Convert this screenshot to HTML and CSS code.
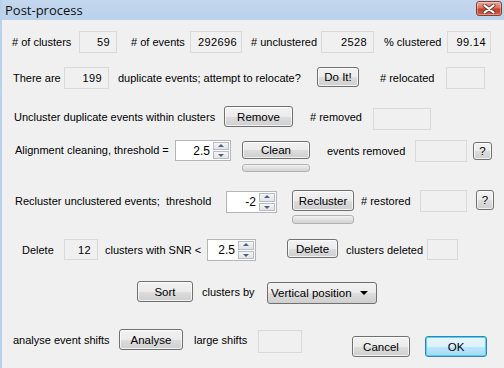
FILE: index.html
```html
<!DOCTYPE html>
<html lang="en">
<head>
    <meta charset="UTF-8">
    <meta name="viewport" content="width=device-width, initial-scale=1.0">
    <title>Post-process</title>
    <link rel="stylesheet" href="styles.css">
</head>
<body>
    <div class="window">
        <div class="titlebar">
            <span class="title">Post-process</span>
            <div class="close">
                <svg width="14" height="10" viewBox="0 0 14 10">
                    <path d="M2.5 1.5 L11.5 8.5 M11.5 1.5 L2.5 8.5" stroke="#6b3a33" stroke-width="4" stroke-linecap="round"/>
                    <path d="M2.5 1.5 L11.5 8.5 M11.5 1.5 L2.5 8.5" stroke="#fff" stroke-width="2.2" stroke-linecap="round"/>
                </svg>
            </div>
        </div>

        <div class="body">
            <!-- summary -->
            <div class="row row-summary">
                <span class="lbl lbl-clusters"># of clusters</span>
                <div class="box box-clusters">59</div>
                <span class="lbl lbl-events"># of events</span>
                <div class="box box-events">292696</div>
                <span class="lbl lbl-unclustered"># unclustered</span>
                <div class="box box-unclustered">2528</div>
                <span class="lbl lbl-pct">% clustered</span>
                <div class="box box-pct">99.14</div>
            </div>

            <!-- duplicates -->
            <div class="row row-dup">
                <span class="lbl lbl-there">There are</span>
                <div class="box box-dup">199</div>
                <span class="lbl lbl-duptext">duplicate events; attempt to relocate?</span>
                <button class="btn btn-doit">Do It!</button>
                <span class="lbl lbl-relocated"># relocated</span>
                <div class="box box-relocated"></div>
            </div>

            <div class="row row-uncl">
                <span class="lbl lbl-uncl">Uncluster duplicate events within clusters</span>
                <button class="btn btn-remove">Remove</button>
                <span class="lbl lbl-removed"># removed</span>
                <div class="box box-removed"></div>
            </div>

            <!-- alignment cleaning -->
            <div class="row row-clean">
                <span class="lbl lbl-align">Alignment cleaning, threshold =</span>
                <div class="spin spin-clean">
                    <span class="spin-val">2.5</span>
                    <div class="spin-btns"><span class="up"></span><span class="down"></span></div>
                </div>
                <div class="stack stack-clean">
                    <button class="btn btn-clean">Clean</button>
                    <div class="progress"></div>
                </div>
                <span class="lbl lbl-evrem">events removed</span>
                <div class="box box-evrem"></div>
                <button class="btn btn-help help-clean">?</button>
            </div>

            <!-- recluster -->
            <div class="row row-reclust">
                <span class="lbl lbl-reclust">Recluster unclustered events;&nbsp; threshold</span>
                <div class="spin spin-reclust">
                    <span class="spin-val">-2</span>
                    <div class="spin-btns"><span class="up"></span><span class="down"></span></div>
                </div>
                <div class="stack stack-reclust">
                    <button class="btn btn-reclust">Recluster</button>
                    <div class="progress"></div>
                </div>
                <span class="lbl lbl-restored"># restored</span>
                <div class="box box-restored"></div>
                <button class="btn btn-help help-reclust">?</button>
            </div>

            <!-- delete by snr -->
            <div class="row row-delete">
                <span class="lbl lbl-delete">Delete</span>
                <div class="box box-delete">12</div>
                <span class="lbl lbl-snr">clusters with SNR &lt;</span>
                <div class="spin spin-snr">
                    <span class="spin-val">2.5</span>
                    <div class="spin-btns"><span class="up"></span><span class="down"></span></div>
                </div>
                <button class="btn btn-delete">Delete</button>
                <span class="lbl lbl-deleted">clusters deleted</span>
                <div class="box box-deleted"></div>
            </div>

            <!-- sort -->
            <div class="row row-sort">
                <button class="btn btn-sort">Sort</button>
                <span class="lbl lbl-by">clusters by</span>
                <div class="select">
                    <span>Vertical position</span>
                    <span class="caret"></span>
                </div>
            </div>

            <!-- shifts + dialog buttons -->
            <div class="row row-shifts">
                <span class="lbl lbl-shifts">analyse event shifts</span>
                <button class="btn btn-analyse">Analyse</button>
                <span class="lbl lbl-large">large shifts</span>
                <div class="box box-large"></div>
                <button class="btn btn-cancel">Cancel</button>
                <button class="btn btn-ok">OK</button>
            </div>
        </div>
    </div>
</body>
</html>
```
FILE: styles.css
```css
* {
    box-sizing: border-box;
}

body {
    margin: 0;
    font-family: 'Liberation Sans', Arial, sans-serif;
    font-size: 11px;
    color: #000;
    background: #f0f0f0;
}

.window {
    width: 504px;
    height: 368px;
    border-left: 2px solid #b9d1ea;
    background: #f0f0f0;
    overflow: hidden;
}

.titlebar {
    height: 20px;
    margin-left: -2px;
    background: linear-gradient(#c4d8ef, #b9d1ea);
    display: flex;
    align-items: center;
    justify-content: space-between;
}

.title {
    font-family: 'Open Sans', 'Liberation Sans', sans-serif;
    font-size: 13px;
    color: #111;
    margin-left: 5px;
    margin-top: -1px;
}

.close {
    width: 26px;
    height: 15px;
    margin-right: 2px;
    margin-top: -3px;
    border: 1px solid #8a3b33;
    border-radius: 3px;
    background: linear-gradient(#e9a99c 0%, #d8735f 45%, #c2412a 55%, #d35e3f 100%);
    box-shadow: inset 0 0 0 1px rgba(255, 255, 255, 0.35);
    display: flex;
    align-items: center;
    justify-content: center;
}

.body {
    padding-top: 11px;
}

.row {
    display: flex;
    align-items: flex-start;
}

.lbl {
    display: block;
    white-space: nowrap;
    height: 22px;
    line-height: 22px;
    flex-shrink: 0;
}

.box {
    flex-shrink: 0;
    height: 22px;
    border: 1px solid #d9d9d9;
    background: #f0f0f0;
    text-align: right;
    padding-right: 6px;
    line-height: 20px;
    letter-spacing: 0.4px;
}

.btn {
    flex-shrink: 0;
    margin: 0;
    padding: 0;
    height: 21px;
    font-family: inherit;
    font-size: 11.5px;
    color: #000;
    border: 1px solid #707070;
    border-radius: 3px;
    background: linear-gradient(#f2f2f2 0%, #ebebeb 50%, #dddddd 51%, #cfcfcf 100%);
    box-shadow: inset 0 0 0 1px rgba(255, 255, 255, 0.7);
}

.stack {
    display: flex;
    flex-direction: column;
    flex-shrink: 0;
}

.progress {
    border: 1px solid #b2b2b2;
    border-radius: 3px;
    background: linear-gradient(#f3f3f3, #e0e0e0 50%, #d3d3d3);
}

/* spinner */
.spin {
    flex-shrink: 0;
    display: flex;
    height: 22px;
    border: 1px solid #b5b5b5;
    background: #fff;
}

.spin-val {
    flex: 1;
    text-align: right;
    padding-right: 3px;
    line-height: 20px;
    font-size: 12px;
}

.spin-btns {
    width: 17px;
    display: flex;
    flex-direction: column;
    gap: 1px;
    padding: 1px 1px 1px 0;
}

.spin-btns span {
    flex: 1;
    border: 1px solid #b6bcc6;
    background: linear-gradient(#f6f6f6, #e3e3e3);
    position: relative;
}

.spin-btns span::after {
    content: '';
    position: absolute;
    left: 50%;
    top: 50%;
    margin-left: -3px;
    border-left: 3px solid transparent;
    border-right: 3px solid transparent;
}

.spin-btns .up::after {
    margin-top: -2px;
    border-bottom: 3px solid #4b5f88;
}

.spin-btns .down::after {
    margin-top: -1px;
    border-top: 3px solid #4b5f88;
}

/* row 1 */
.row-summary { margin-top: 0; }
.lbl-clusters { margin-left: 10px; width: 67px; }
.box-clusters { width: 38px; }
.lbl-events { margin-left: 14px; width: 59px; }
.box-events { width: 52px; padding-right: 4px; }
.lbl-unclustered { margin-left: 9px; width: 70px; }
.box-unclustered { width: 53px; }
.lbl-pct { margin-left: 10px; width: 63px; }
.box-pct { width: 44px; padding-right: 4px; }

/* row 2 */
.row-dup { margin-top: 14px; }
.lbl-there { margin-left: 11px; width: 51px; }
.box-dup { width: 45px; }
.lbl-duptext { margin-left: 9px; width: 199px; }
.btn-doit { width: 42px; height: 20px; }
.lbl-relocated { margin-left: 21px; width: 66px; }
.box-relocated { width: 39px; }

/* row 3 */
.row-uncl { margin-top: 17px; }
.lbl-uncl { margin-left: 12px; width: 210px; }
.btn-remove { width: 69px; }
.lbl-removed { margin-left: 17px; width: 63px; }
.box-removed { width: 58px; margin-top: 2px; }

/* row 4 */
.row-clean { margin-top: 10px; }
.lbl-align { margin-left: 13px; width: 160px; height: 21px; line-height: 21px; }
.spin-clean { width: 56px; height: 21px; }
.stack-clean { margin-left: 11px; width: 68px; }
.btn-clean { height: 18px; margin-top: 1px; }
.stack-clean .progress { margin-top: 5px; height: 8px; }
.lbl-evrem { margin-left: 17px; width: 88px; }
.box-evrem { width: 52px; }
.help-clean { margin-left: 6px; width: 19px; height: 18px; margin-top: 2px; }

/* row 5 */
.row-reclust { margin-top: 18px; }
.lbl-reclust { margin-left: 13px; width: 211px; height: 23px; line-height: 23px; }
.spin-reclust { width: 51px; margin-top: 1px; }
.stack-reclust { margin-left: 15px; width: 62px; }
.stack-reclust .progress { margin-top: 4px; height: 9px; }
.lbl-restored { margin-left: 7px; width: 59px; }
.box-restored { width: 47px; }
.help-reclust { margin-left: 9px; width: 18px; height: 20px; }

/* row 6 */
.row-delete { margin-top: 15px; }
.lbl-delete { margin-left: 20px; width: 42px; }
.box-delete { width: 34px; height: 21px; }
.lbl-snr { margin-left: 7px; width: 102px; }
.spin-snr { width: 49px; }
.btn-delete { margin-left: 31px; width: 51px; height: 19px; }
.lbl-deleted { margin-left: 8px; width: 81px; }
.box-deleted { width: 31px; height: 21px; }

/* row 7 */
.row-sort { margin-top: 20px; }
.btn-sort { margin-left: 135px; width: 56px; }
.lbl-by { margin-left: 9px; width: 65px; }

.select {
    flex-shrink: 0;
    width: 110px;
    height: 22px;
    margin-top: 1px;
    border: 1px solid #707070;
    border-radius: 3px;
    background: linear-gradient(#f2f2f2 0%, #ebebeb 50%, #dddddd 51%, #cfcfcf 100%);
    display: flex;
    align-items: center;
    justify-content: space-between;
    padding: 0 8px 0 3px;
    font-size: 11.5px;
}

.caret {
    border-left: 4px solid transparent;
    border-right: 4px solid transparent;
    border-top: 4px solid #000;
}

/* row 8 */
.row-shifts { margin-top: 25px; }
.lbl-shifts { margin-left: 11px; width: 106px; }
.btn-analyse { width: 64px; }
.lbl-large { margin-left: 11px; width: 64px; }
.box-large { width: 44px; height: 23px; margin-top: 1px; }
.btn-cancel { margin-left: 50px; width: 58px; margin-top: 7px; }

.btn-ok {
    margin-left: 15px;
    width: 62px;
    margin-top: 7px;
    border-color: #3c7fb1;
    box-shadow: inset 0 0 0 1px #48d7fb;
    background: linear-gradient(#eaf6fd 0%, #d9f0fc 50%, #bee6fd 51%, #a7d9f5 100%);
}
```
